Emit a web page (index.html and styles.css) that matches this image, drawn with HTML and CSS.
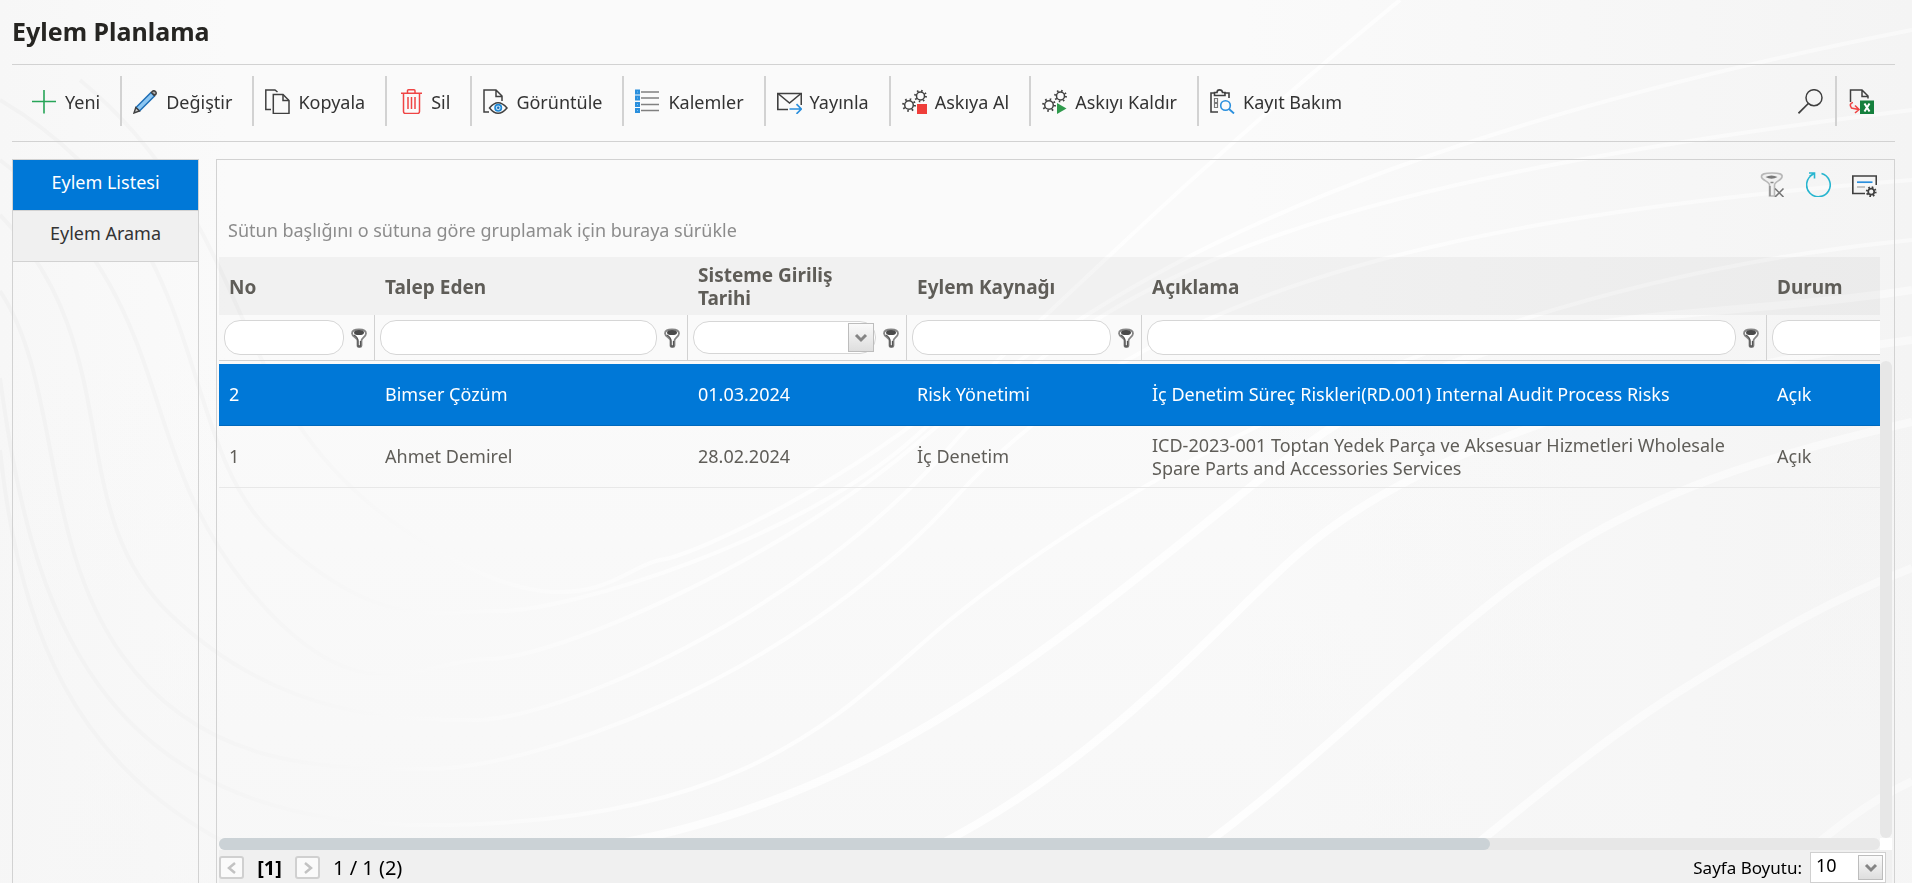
FILE: index.html
```html
<!DOCTYPE html>
<html lang="tr">
<head>
<meta charset="utf-8">
<title>Eylem Planlama</title>
<link rel="stylesheet" href="styles.css">
</head>
<body>
<svg class="backdrop" viewBox="0 0 1912 883" preserveAspectRatio="none" aria-hidden="true">
  <defs>
    <linearGradient id="shade" x1="0" y1="0" x2="1" y2="0">
      <stop offset="0" stop-color="#f7f7f7"/><stop offset=".12" stop-color="#fafafa"/>
      <stop offset=".65" stop-color="#fafafa"/><stop offset="1" stop-color="#f4f4f4"/>
    </linearGradient>
    <linearGradient id="floor" x1="0" y1="0" x2="0" y2="1">
      <stop offset=".4" stop-color="#f6f6f6" stop-opacity="0"/><stop offset="1" stop-color="#f6f6f6" stop-opacity=".7"/>
    </linearGradient>
    <linearGradient id="ribbon" gradientUnits="userSpaceOnUse" x1="0" y1="0" x2="1912" y2="0">
      <stop offset="0" stop-color="#f2f2f2"/><stop offset=".12" stop-color="#f5f5f5"/>
      <stop offset=".23" stop-color="#f9f9f9"/><stop offset=".36" stop-color="#fdfdfd"/>
      <stop offset=".65" stop-color="#fefefe"/><stop offset="1" stop-color="#f9f9f9"/>
    </linearGradient>
  </defs>
  <rect width="1912" height="883" fill="url(#shade)"/>
  <rect width="1912" height="883" fill="url(#floor)"/>
  <g fill="none" stroke="url(#ribbon)" stroke-width="4">
    <path d="M0 450C20 640 80 760 213 836S420 890 520 890"/>
    <path d="M0 378C30 600 90 825 427 825S850 700 956 615 1400 290 1912 240"/>
    <path d="M0 291C60 380 40 540 122 655S330 769 427 769 780 690 956 497 1400 220 1912 180"/>
    <path d="M0 215C130 350 60 510 171 615S400 720 476 720 800 620 956 440 1350 180 1912 110"/>
    <path d="M0 160C180 300 130 440 244 583S420 659 488 659 780 560 915 445 1250 160 1912 30"/>
    <path d="M0 100C220 230 170 440 275 536S430 611 500 611 800 540 915 437 1180 180 1400 0"/>
    <path d="M80 80C260 230 220 400 396 524S620 566 660 560 850 480 956 390"/>
  </g>
  <g fill="none" stroke="url(#ribbon)" stroke-width="8">
    <path d="M427 860C800 860 1000 690 1249 488S1650 330 1912 290"/>
    <path d="M800 900C1050 830 1200 640 1298 554S1600 380 1912 340"/>
    <path d="M1140 890C1280 800 1383 686 1505 592S1750 460 1912 422"/>
    <path d="M1420 890C1520 810 1600 740 1688 686S1830 600 1912 568"/>
    <path d="M1760 890C1810 852 1850 810 1912 781"/>
  </g>
</svg>

<svg class="sprite" aria-hidden="true">
  <symbol id="funnel" viewBox="0 0 16 20">
    <path d="M1 5.500C1 2.500 3.500 1.500 8 1.500s7 1 7 4c0 3-4.500 4.500-4.500 7v5q0 1.500-1.500 1.500H8q-1.500 0-1.500-1.500v-5C6.500 10 1 8.500 1 5.500z" fill="#fff" stroke="#858585" stroke-width="1.800"/>
    <ellipse cx="8" cy="4.500" rx="5" ry="2.600" fill="#4a4a4a"/>
    <path d="M3 7c3 2 4 3.500 4 6v5h2.500v-5" fill="none" stroke="#555" stroke-width="1.300"/>
  </symbol>
  <symbol id="chevron" viewBox="0 0 14 10">
    <path d="M2 2l5 5 5-5" fill="none" stroke="#858585" stroke-width="3"/>
  </symbol>
  <symbol id="gears" viewBox="0 0 25 25">
    <g fill="none" stroke="#404040">
      <circle cx="7" cy="16" r="4.300" stroke-width="1.500"/>
      <circle cx="7" cy="16" r="5.900" stroke-width="2" stroke-dasharray="1.600 3.033"/>
      <circle cx="18.500" cy="7" r="4" stroke-width="1.500"/>
      <circle cx="18.500" cy="7" r="5.400" stroke-width="2" stroke-dasharray="1.500 2.741"/>
    </g>
  </symbol>
</svg>

<div class="page">
  <header class="page-header"><h1 class="page-title">Eylem Planlama</h1></header>

  <div class="toolbar" role="toolbar">
    <button class="tool">
      <svg class="icon" viewBox="0 0 25 25"><path d="M0 12.500h24M12 1v23.500" stroke="#27a558" stroke-width="1.600"/></svg>
      <span class="tool-text">Yeni</span>
    </button>
    <button class="tool">
      <svg class="icon" viewBox="0 0 25 25"><path d="M3 18.500L18 3.500l3.500 3.500-15 15z" fill="#8cc6f2" stroke="#1e6db4" stroke-width="1.500"/><path d="M18.500 3.500c1.500-2.500 3-2 4-1s1.200 2.500-1 4z" fill="#a9a9a9" stroke="#404040" stroke-width="1.500"/><path d="M2.800 18.500L1 24l5.500-2z" fill="#ccc" stroke="#404040" stroke-width="1.400"/></svg>
      <span class="tool-text">Değiştir</span>
    </button>
    <button class="tool">
      <svg class="icon" viewBox="0 0 25 25"><path d="M6 20.500H.8V1H10l2.500 2" fill="none" stroke="#404040" stroke-width="1.500"/><path d="M8.300 5.500H18l6 6v13H8.300z" fill="#fafafa" stroke="#404040" stroke-width="1.500"/><path d="M18 5.500v6h6" fill="none" stroke="#404040" stroke-width="1.500"/></svg>
      <span class="tool-text">Kopyala</span>
    </button>
    <button class="tool">
      <svg class="icon" viewBox="-3 0 25 25"><path d="M0 4.200h21M6.500 4V1.800Q6.500.8 7.500.8h5.500q1 0 1 1V4M2.500 4.500v18q0 2 2 2h12q2 0 2-2v-18M7 8v12M10.500 8v12M14 8v12" fill="none" stroke="#ef4444" stroke-width="1.500"/></svg>
      <span class="tool-text">Sil</span>
    </button>
    <button class="tool">
      <svg class="icon" viewBox="0 0 25 25"><path d="M6 23H1V1h12l6 6v5M13 1v6.500h6" fill="none" stroke="#404040" stroke-width="1.500"/><path d="M6.500 19Q15 8.500 24 19q-9 10.500-17.500 0z" fill="#fafafa" stroke="#404040" stroke-width="1.500"/><circle cx="15.200" cy="18.800" r="3.200" fill="#bfe0f7" stroke="#1e88d6" stroke-width="1.600"/><circle cx="15.200" cy="18.800" r="1.200" fill="#1e6db4"/></svg>
      <span class="tool-text">Görüntüle</span>
    </button>
    <button class="tool">
      <svg class="icon" viewBox="0 0 25 25"><path d="M6 3h18M6 9h18M6 15.500h18M6 21.500h18" stroke="#808080" stroke-width="1.500"/><g fill="#7cc0f2" stroke="#2a8fdd" stroke-width="2"><path d="M1 1.500h3v3H1zM1 7.500h3v3H1zM1 14h3v3H1zM1 20h3v3H1z"/></g></svg>
      <span class="tool-text">Kalemler</span>
    </button>
    <button class="tool">
      <svg class="icon" viewBox="0 0 25 25"><path d="M11 20.500H.8v-16h23.500V16" fill="none" stroke="#404040" stroke-width="1.600"/><path d="M1 4.500l11.500 9.500L24 4.500" fill="none" stroke="#404040" stroke-width="1.600"/><path d="M12.500 20H24M19.500 15.200l4.800 4.800-4.800 4.800" fill="none" stroke="#2a8fdd" stroke-width="1.700"/></svg>
      <span class="tool-text">Yayınla</span>
    </button>
    <button class="tool">
      <svg class="icon" viewBox="0 0 25 25"><use href="#gears"/><path d="M15 15h10v10H15z" fill="#ef3e3a"/></svg>
      <span class="tool-text">Askıya Al</span>
    </button>
    <button class="tool">
      <svg class="icon" viewBox="0 0 25 25"><use href="#gears"/><path d="M15 14l9.500 5.500L15 25z" fill="#2f9a4c"/></svg>
      <span class="tool-text">Askıyı Kaldır</span>
    </button>
    <button class="tool">
      <svg class="icon" viewBox="0 0 25 25"><path d="M8 23H1V4h4M14 4h5v5M4.500 6.500v-3H7C7 0 12 0 12.500 3.500H15v3z" fill="none" stroke="#404040" stroke-width="1.600"/><path d="M4.500 9.500h3v4h-3zM4.500 14.500h3v4h-3z" fill="none" stroke="#777" stroke-width="1.200"/><circle cx="15.500" cy="16.500" r="4.800" fill="#fafafa" stroke="#2a8fdd" stroke-width="1.600"/><path d="M19 20l5 4.500" stroke="#2a8fdd" stroke-width="1.800"/></svg>
      <span class="tool-text">Kayıt Bakım</span>
    </button>
    <div class="toolbar-end">
      <button class="tool tool-icon" aria-label="Ara">
        <svg class="icon" viewBox="0 0 25 25"><circle cx="16" cy="8.700" r="8" fill="none" stroke="#404040" stroke-width="1.500"/><path d="M10.300 14.500L.5 24.300" stroke="#404040" stroke-width="1.700"/></svg>
      </button>
      <button class="tool tool-icon" aria-label="Excel'e aktar">
        <svg class="icon" viewBox="0 0 25 25"><path d="M1.500 13V1h11.500l6 6v2.500M13 1v6.500h6" fill="none" stroke="#404040" stroke-width="1.500"/><path d="M4 13.500c-3 .5-3.500 3-1.500 5.500l7 1.500M6 16.500l4 4-4 3.500" fill="none" stroke="#ef4444" stroke-width="1.600"/><rect x="11" y="11.500" width="14" height="13.500" fill="#15803d"/><path d="M15.500 14.500l5 8M20.500 14.500l-5 8" stroke="#fff" stroke-width="2"/></svg>
      </button>
    </div>
  </div>

  <div class="workspace">
    <nav class="side">
      <a class="side-link side-link-active" href="#">Eylem Listesi</a>
      <a class="side-link" href="#">Eylem Arama</a>
    </nav>

    <main class="panel">
      <div class="panel-tools">
        <button class="panel-tool" aria-label="Filtreyi temizle">
          <svg class="icon" viewBox="0 0 25 25"><path d="M1.500 5C1 2 5 1 12 1s11 1 10 4c-.5 3-7.500 5-7.500 8V24h-5V13C9.500 10 2 8 1.500 5z" fill="#f0f0f0" stroke="#b8b8b8" stroke-width="1.600"/><path d="M5.500 5q6-3 12 0-6 3.500-12 0z" fill="#777"/><path d="M10 14v10M10.500 10.500h3" stroke="#888" stroke-width="1.300"/><path d="M15 16.500l8.500 8.500M23.500 16.500L15 25" stroke="#777" stroke-width="1.600"/></svg>
        </button>
        <button class="panel-tool" aria-label="Yenile">
          <svg class="icon" viewBox="0 0 25 25"><path d="M15.500 1.500a11.800 11.800 0 1 1-8.500.9M3 1h5.500v5.500M8.500 1L3.500 4.500" fill="none" stroke="#27b5cf" stroke-width="1.600"/></svg>
        </button>
        <button class="panel-tool" aria-label="Görünüm ayarları">
          <svg class="icon" viewBox="0 0 25 25"><path d="M13 21.500H.8V4h23.500v9" fill="none" stroke="#404040" stroke-width="1.700"/><path d="M5 10.200h15.500" stroke="#2a8fdd" stroke-width="1.700"/><path d="M5 15h8" stroke="#b5b5b5" stroke-width="1.500"/><circle cx="19.200" cy="19.700" r="3" fill="none" stroke="#404040" stroke-width="1.700"/><circle cx="19.200" cy="19.700" r="4.400" fill="none" stroke="#404040" stroke-width="2" stroke-dasharray="1.600 1.856"/></svg>
        </button>
      </div>
      <div class="group-hint">Sütun başlığını o sütuna göre gruplamak için buraya sürükle</div>

      <div class="grid">
        <div class="grid-view">
          <table class="table">
            <colgroup>
              <col class="col-no"><col class="col-owner"><col class="col-date"><col class="col-source"><col class="col-text"><col>
            </colgroup>
            <thead>
              <tr class="head-row">
                <th>No</th><th>Talep Eden</th><th>Sisteme Giriliş Tarihi</th><th>Eylem Kaynağı</th><th>Açıklama</th><th>Durum</th>
              </tr>
              <tr class="filter-row">
                <td><div class="filter"><input class="filter-input" type="text" aria-label="No"><button class="filter-button" aria-label="Filtre"><svg class="funnel"><use href="#funnel"/></svg></button></div></td>
                <td><div class="filter"><input class="filter-input" type="text" aria-label="Talep Eden"><button class="filter-button" aria-label="Filtre"><svg class="funnel"><use href="#funnel"/></svg></button></div></td>
                <td><div class="filter"><div class="date-box"><input class="filter-input filter-input-date" type="text" aria-label="Sisteme Giriliş Tarihi"><button class="drop-button date-drop" aria-label="Takvim"><svg class="chevron"><use href="#chevron"/></svg></button></div><button class="filter-button" aria-label="Filtre"><svg class="funnel"><use href="#funnel"/></svg></button></div></td>
                <td><div class="filter"><input class="filter-input" type="text" aria-label="Eylem Kaynağı"><button class="filter-button" aria-label="Filtre"><svg class="funnel"><use href="#funnel"/></svg></button></div></td>
                <td><div class="filter"><input class="filter-input" type="text" aria-label="Açıklama"><button class="filter-button" aria-label="Filtre"><svg class="funnel"><use href="#funnel"/></svg></button></div></td>
                <td><div class="filter"><input class="filter-input" type="text" aria-label="Durum"><button class="filter-button" aria-label="Filtre"><svg class="funnel"><use href="#funnel"/></svg></button></div></td>
              </tr>
            </thead>
            <tbody>
              <tr class="spacer-row"><td colspan="6"></td></tr>
              <tr class="row row-selected">
                <td>2</td><td>Bimser Çözüm</td><td>01.03.2024</td><td>Risk Yönetimi</td><td>İç Denetim Süreç Riskleri(RD.001) Internal Audit Process Risks</td><td>Açık</td>
              </tr>
              <tr class="row">
                <td>1</td><td>Ahmet Demirel</td><td>28.02.2024</td><td>İç Denetim</td><td>ICD-2023-001 Toptan Yedek Parça ve Aksesuar Hizmetleri Wholesale Spare Parts and Accessories Services</td><td>Açık</td>
              </tr>
            </tbody>
          </table>
        </div>
        <div class="scroll-y"></div>
        <div class="scroll-x"><div class="scroll-thumb"></div></div>
        <div class="scroll-corner"></div>
      </div>

      <footer class="pager">
        <button class="page-button" aria-label="Önceki"><svg class="arrow" viewBox="0 0 10 12"><path d="M8 1L2 6l6 5" fill="none" stroke="#c2c2c2" stroke-width="2.500"/></svg></button>
        <b class="page-current">[1]</b>
        <button class="page-button" aria-label="Sonraki"><svg class="arrow" viewBox="0 0 10 12"><path d="M2 1l6 5-6 5" fill="none" stroke="#c2c2c2" stroke-width="2.500"/></svg></button>
        <span class="page-info">1 / 1 (2)</span>
        <label class="size-label" for="size">Sayfa Boyutu:</label>
        <div class="size-box">
          <select class="size-select" id="size"><option>10</option></select>
          <span class="drop-button size-drop"><svg class="chevron"><use href="#chevron"/></svg></span>
        </div>
      </footer>
    </main>
  </div>
</div>
</body>
</html>
```
FILE: styles.css
```css
* { box-sizing: border-box; }

body {
  margin: 0;
  font-family: Tahoma, "Noto Sans", "DejaVu Sans", sans-serif;
  font-size: 18px;
  line-height: 23px;
  color: #333;
  background: #fafafa;
}

button, input, select { font: inherit; color: inherit; }
button { border: 0; padding: 0; background: none; cursor: pointer; }

.backdrop { position: fixed; inset: 0; z-index: -1; width: 100%; height: 100%; }
.sprite { display: none; }

.page {
  display: flex;
  flex-direction: column;
  height: 100vh;
  padding: 0 17px 0 12px;
  overflow: hidden;
}

.page-header { padding: 15px 0 17px; border-bottom: 1px solid #d2d2d2; }
.page-title { margin: 0; font-size: 25px; line-height: 32px; color: #262522; }

.toolbar {
  display: flex;
  align-items: center;
  padding: 11px 0 15px 8px;
  border-bottom: 1px solid #d2d2d2;
}
.tool {
  display: flex;
  align-items: center;
  gap: 8px;
  height: 50px;
  padding: 0 20px 0 12px;
  white-space: nowrap;
}
.tool + .tool { border-left: 2px solid #d2d2d2; padding-left: 11px; }
.tool-text { padding-top: 2px; }
.icon { flex: none; width: 25px; height: 25px; }
.toolbar-end { display: flex; margin-left: auto; }
.tool-icon { padding: 0 12px; }
.tool-icon + .tool-icon { padding: 0 21px 0 12px; }

.workspace { display: flex; flex: 1; gap: 17px; min-height: 0; padding-top: 17px; }

.side {
  flex: none;
  width: 187px;
  border: 1px solid #d2d2d2;
  border-bottom: 0;
}
.side-link {
  display: block;
  height: 51px;
  padding-top: 11px;
  border-bottom: 1px solid #d2d2d2;
  background: #f0f0f0;
  color: #333;
  text-align: center;
  text-decoration: none;
}
.side-link-active { background: #0078d7; color: #fff; }

.panel {
  display: flex;
  flex: 1;
  flex-direction: column;
  min-width: 0;
  padding: 0 2px;
  border: 1px solid #d2d2d2;
  border-bottom: 0;
}
.panel-tools { display: flex; justify-content: flex-end; gap: 21px; padding: 12px 15px 0 0; }
.panel-tool { display: flex; }
.group-hint { padding: 22px 9px 15px; color: #8c8c8c; }

.grid {
  display: grid;
  flex: 1;
  grid-template-columns: minmax(0, 1fr) 12px;
  grid-template-rows: minmax(0, 1fr) 12px;
  min-height: 0;
}
.grid-view { overflow: hidden; }

.table { width: 2172px; table-layout: fixed; border-collapse: separate; border-spacing: 0; color: #5f5d58; }
.table td, .table th { padding: 0; text-align: left; }
.col-no { width: 156px; }
.col-owner { width: 313px; }
.col-date { width: 219px; }
.col-source { width: 235px; }
.col-text { width: 625px; }

.head-row { height: 58px; background: rgba(0, 0, 0, 0.035); }
.table .head-row th { padding: 2px 36px 0 10px; font-size: 19px; }
.filter-row { height: 46px; }
.filter-row td { border-right: 1px solid #d2d2d2; border-bottom: 1px solid #d2d2d2; }
.filter { display: flex; align-items: center; gap: 7px; padding: 0 7px 0 5px; }
.filter-input {
  flex: 1;
  width: 100%;
  min-width: 0;
  height: 35px;
  padding: 0 12px;
  border: 1px solid #d6d6d6;
  border-radius: 16px;
  background: #fff;
}
.filter-input-date { height: 33px; }
.date-box { position: relative; display: flex; flex: 1; min-width: 0; }
.filter-button { display: flex; }
.funnel { width: 16px; height: 20px; }
.chevron { width: 14px; height: 10px; }
.drop-button {
  position: absolute;
  display: flex;
  align-items: center;
  justify-content: center;
  border: 1px solid #bdbdbd;
  background: linear-gradient(#fafafa, #dedede);
}
.date-drop { top: 2px; right: 2px; width: 26px; height: 29px; }

.spacer-row { height: 3px; }
.row { height: 62px; }
.table .row td { padding: 0 36px 0 10px; border-bottom: 1px solid #e8e8e8; }
.table .row-selected td { border-bottom-color: #0069bd; }
.row-selected { background: #0078d7; color: #fff; }

.scroll-y { margin-top: 104px; border-radius: 6px; background: #e7e7e7; }
.scroll-x { border-radius: 6px; background: #e7e7e7; }
.scroll-thumb { width: 76.5%; height: 12px; border-radius: 6px; background: #cbd2d6; }
.scroll-corner { background: #fff; }

.pager { display: flex; align-items: center; height: 33px; padding: 2px 6px 0 0; background: #f0f0f0; color: #000; }
.page-button {
  display: flex;
  flex: none;
  align-items: center;
  justify-content: center;
  width: 25px;
  height: 23px;
  border: 2px solid #d0d0d0;
  border-radius: 3px;
  background: #fafafa;
}
.arrow { width: 10px; height: 12px; }
.page-current { width: 51px; font-size: 20px; text-align: center; }
.page-info { padding-left: 13px; font-size: 20px; }
.size-label { margin-left: auto; padding-right: 8px; font-size: 17px; }
.size-box { position: relative; width: 76px; height: 31px; }
.size-select {
  width: 100%;
  height: 100%;
  padding: 0 0 4px 5px;
  border: 1px solid #d0d0d0;
  border-radius: 0;
  background: #fff;
  appearance: none;
}
.size-drop { top: 3px; right: 3px; width: 25px; height: 25px; pointer-events: none; }
```
